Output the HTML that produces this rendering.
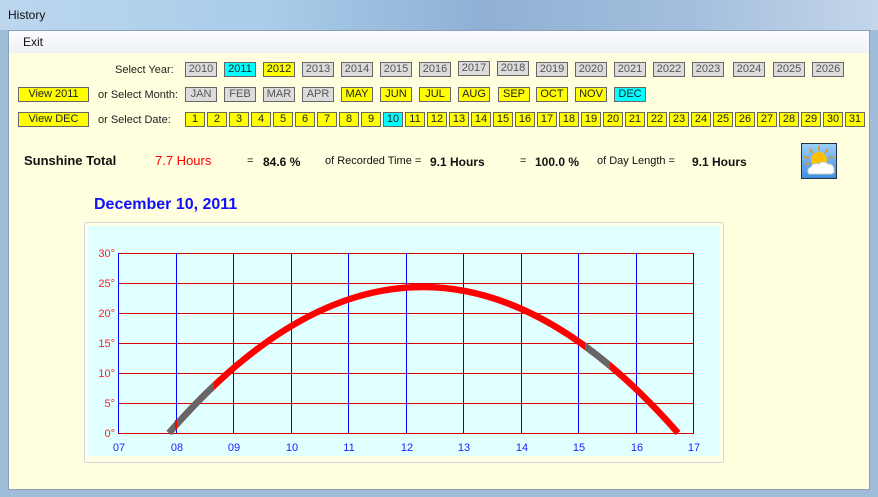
<!DOCTYPE html>
<html><head><meta charset="utf-8"><style>
body{margin:0;width:878px;height:497px;overflow:hidden;position:relative;font-family:"Liberation Sans",sans-serif;background:#9fbcd8}
.abs{position:absolute}
.title{left:0;top:0;width:878px;height:30px;background:linear-gradient(90deg,#bcd6ee 0%,#a9cdea 30%,#8fb0d4 55%,#a5c0de 80%,#c4d6ea 100%)}
.client{left:8px;top:30px;width:862px;height:460px;background:#ffffe0;border:1px solid #8aa0b8;box-sizing:border-box}
.menu{left:9px;top:31px;width:860px;height:22px;background:linear-gradient(#fbfcfe,#eef1f6)}
.b{position:absolute;height:15px;box-sizing:border-box;border:1px solid #666;font-size:11px;line-height:13px;text-align:center;color:#333}
.g{background:#dcdcdc;color:#555}.y{background:#ffff00;color:#222}.c{background:#00ffff;color:#222}
.lab{position:absolute;font-size:11px;color:#222}
.st{position:absolute;top:155px;font-size:12px;color:#111}
</style></head><body>
<div class="abs title"></div>
<div class="abs" style="left:8px;top:8px;font-size:12px;color:#111">History</div>
<div class="abs client"></div>
<div class="abs menu"></div>
<div class="abs" style="left:23px;top:35px;font-size:12px;color:#111">Exit</div>

<div class="lab" style="left:115px;top:64px">Select Year:</div>
<div class="lab" style="left:98px;top:89px">or Select Month:</div>
<div class="lab" style="left:98px;top:114px">or Select Date:</div>
<div class="b y" style="left:18px;top:87px;width:71px">View 2011</div>
<div class="b y" style="left:18px;top:112px;width:71px">View DEC</div>

<div class="b g" style="left:185px;top:62px;width:32px">2010</div>
<div class="b c" style="left:224px;top:62px;width:32px">2011</div>
<div class="b y" style="left:263px;top:62px;width:32px">2012</div>
<div class="b g" style="left:302px;top:62px;width:32px">2013</div>
<div class="b g" style="left:341px;top:62px;width:32px">2014</div>
<div class="b g" style="left:380px;top:62px;width:32px">2015</div>
<div class="b g" style="left:419px;top:62px;width:32px">2016</div>
<div class="b g" style="left:458px;top:61px;width:32px">2017</div>
<div class="b g" style="left:497px;top:61px;width:32px">2018</div>
<div class="b g" style="left:536px;top:62px;width:32px">2019</div>
<div class="b g" style="left:575px;top:62px;width:32px">2020</div>
<div class="b g" style="left:614px;top:62px;width:32px">2021</div>
<div class="b g" style="left:653px;top:62px;width:32px">2022</div>
<div class="b g" style="left:692px;top:62px;width:32px">2023</div>
<div class="b g" style="left:733px;top:62px;width:32px">2024</div>
<div class="b g" style="left:773px;top:62px;width:32px">2025</div>
<div class="b g" style="left:812px;top:62px;width:32px">2026</div>

<div class="b g" style="left:185px;top:87px;width:32px">JAN</div>
<div class="b g" style="left:224px;top:87px;width:32px">FEB</div>
<div class="b g" style="left:263px;top:87px;width:32px">MAR</div>
<div class="b g" style="left:302px;top:87px;width:32px">APR</div>
<div class="b y" style="left:341px;top:87px;width:32px">MAY</div>
<div class="b y" style="left:380px;top:87px;width:32px">JUN</div>
<div class="b y" style="left:419px;top:87px;width:32px">JUL</div>
<div class="b y" style="left:458px;top:87px;width:32px">AUG</div>
<div class="b y" style="left:498px;top:87px;width:32px">SEP</div>
<div class="b y" style="left:536px;top:87px;width:32px">OCT</div>
<div class="b y" style="left:575px;top:87px;width:32px">NOV</div>
<div class="b c" style="left:614px;top:87px;width:32px">DEC</div>

<div class="b y" style="left:185px;top:112px;width:20px">1</div>
<div class="b y" style="left:207px;top:112px;width:20px">2</div>
<div class="b y" style="left:229px;top:112px;width:20px">3</div>
<div class="b y" style="left:251px;top:112px;width:20px">4</div>
<div class="b y" style="left:273px;top:112px;width:20px">5</div>
<div class="b y" style="left:295px;top:112px;width:20px">6</div>
<div class="b y" style="left:317px;top:112px;width:20px">7</div>
<div class="b y" style="left:339px;top:112px;width:20px">8</div>
<div class="b y" style="left:361px;top:112px;width:20px">9</div>
<div class="b c" style="left:383px;top:112px;width:20px">10</div>
<div class="b y" style="left:405px;top:112px;width:20px">11</div>
<div class="b y" style="left:427px;top:112px;width:20px">12</div>
<div class="b y" style="left:449px;top:112px;width:20px">13</div>
<div class="b y" style="left:471px;top:112px;width:20px">14</div>
<div class="b y" style="left:493px;top:112px;width:20px">15</div>
<div class="b y" style="left:515px;top:112px;width:20px">16</div>
<div class="b y" style="left:537px;top:112px;width:20px">17</div>
<div class="b y" style="left:559px;top:112px;width:20px">18</div>
<div class="b y" style="left:581px;top:112px;width:20px">19</div>
<div class="b y" style="left:603px;top:112px;width:20px">20</div>
<div class="b y" style="left:625px;top:112px;width:20px">21</div>
<div class="b y" style="left:647px;top:112px;width:20px">22</div>
<div class="b y" style="left:669px;top:112px;width:20px">23</div>
<div class="b y" style="left:691px;top:112px;width:20px">24</div>
<div class="b y" style="left:713px;top:112px;width:20px">25</div>
<div class="b y" style="left:735px;top:112px;width:20px">26</div>
<div class="b y" style="left:757px;top:112px;width:20px">27</div>
<div class="b y" style="left:779px;top:112px;width:20px">28</div>
<div class="b y" style="left:801px;top:112px;width:20px">29</div>
<div class="b y" style="left:823px;top:112px;width:20px">30</div>
<div class="b y" style="left:845px;top:112px;width:20px">31</div>

<div class="st" style="left:24px;top:153px;font-size:13px;font-weight:bold">Sunshine Total</div>
<div class="st" style="left:155px;top:153px;font-size:13px;color:#f00">7.7 Hours</div>
<div class="st" style="left:247px;font-size:11px">=</div>
<div class="st" style="left:263px;font-weight:bold">84.6 %</div>
<div class="st" style="left:325px;font-size:11px">of Recorded Time =</div>
<div class="st" style="left:430px;font-weight:bold">9.1 Hours</div>
<div class="st" style="left:520px;font-size:11px">=</div>
<div class="st" style="left:535px;font-weight:bold">100.0 %</div>
<div class="st" style="left:597px;font-size:11px">of Day Length =</div>
<div class="st" style="left:692px;font-weight:bold">9.1 Hours</div>

<svg class="abs" style="left:801px;top:143px" width="36" height="36" viewBox="0 0 36 36">
<defs><linearGradient id="sk" x1="0" y1="0" x2="0" y2="1"><stop offset="0" stop-color="#9fd0f8"/><stop offset="1" stop-color="#3c8ee0"/></linearGradient></defs>
<rect x="0.5" y="0.5" width="35" height="35" fill="url(#sk)" stroke="#234"/>
<g stroke="#e8901a" stroke-width="1.5"><line x1="18" y1="3" x2="18" y2="8"/><line x1="9" y1="6" x2="12" y2="10"/><line x1="27" y1="6" x2="24" y2="10"/><line x1="3" y1="14" x2="8" y2="15"/><line x1="33" y1="14" x2="28" y2="15"/><line x1="4" y1="22" x2="8" y2="20"/></g>
<circle cx="18" cy="17" r="8" fill="#ffc000"/>
<path d="M8 31 Q5 26 10 24 Q12 19 18 21 Q22 17 27 21 Q33 21 33 27 Q34 31 29 31 Z" fill="#fff" stroke="#ccc"/>
</svg>

<div class="abs" style="left:94px;top:196px;font-size:16px;font-weight:bold;color:#1010ff">December 10, 2011</div>

<div class="abs" style="left:84px;top:222px;width:640px;height:241px;border:1px solid #d0d4d8;border-radius:3px;background:#ffffe8;box-sizing:border-box"></div>
<div class="abs" style="left:88px;top:226px;width:632px;height:230px;background:#e0ffff"></div>

<svg class="abs" style="left:0;top:0" width="878" height="497">
<g stroke="#dd0000" stroke-width="1">
<line x1="118" y1="253.5" x2="694" y2="253.5"/><line x1="118" y1="283.5" x2="694" y2="283.5"/><line x1="118" y1="313.5" x2="694" y2="313.5"/><line x1="118" y1="343.5" x2="694" y2="343.5"/><line x1="118" y1="373.5" x2="694" y2="373.5"/><line x1="118" y1="403.5" x2="694" y2="403.5"/><line x1="118" y1="433.5" x2="694" y2="433.5"/>
</g>
<g stroke="#0000ff" stroke-width="1">
<line x1="118.5" y1="253" x2="118.5" y2="433"/><line x1="176.5" y1="253" x2="176.5" y2="433"/><line x1="233.5" y1="253" x2="233.5" y2="433"/><line x1="291.5" y1="253" x2="291.5" y2="433"/><line x1="348.5" y1="253" x2="348.5" y2="433"/><line x1="406.5" y1="253" x2="406.5" y2="433"/><line x1="463.5" y1="253" x2="463.5" y2="433"/><line x1="521.5" y1="253" x2="521.5" y2="433"/><line x1="578.5" y1="253" x2="578.5" y2="433"/><line x1="636.5" y1="253" x2="636.5" y2="433"/><line x1="693.5" y1="253" x2="693.5" y2="433"/>
</g>
<defs><clipPath id="gc"><rect x="160" y="380" width="54" height="60"/><rect x="585" y="330" width="25" height="45"/></clipPath></defs>
<path d="M169 433 Q422 141 678 433" fill="none" stroke="#ff0000" stroke-width="6.5"/>
<path d="M169 433 Q422 141 678 433" fill="none" stroke="#666" stroke-width="6.5" clip-path="url(#gc)"/>
<line x1="176" y1="429" x2="176" y2="420" stroke="#f00" stroke-width="2"/>
<g font-family="Liberation Sans, sans-serif" font-size="11" fill="#ff2020" text-anchor="end">
<text x="115" y="257">30°</text><text x="115" y="287">25°</text><text x="115" y="317">20°</text><text x="115" y="347">15°</text><text x="115" y="377">10°</text><text x="115" y="407">5°</text><text x="115" y="437">0°</text>
</g>
<g font-family="Liberation Sans, sans-serif" font-size="11" fill="#2020ff" text-anchor="middle">
<text x="119" y="451">07</text><text x="177" y="451">08</text><text x="234" y="451">09</text><text x="292" y="451">10</text><text x="349" y="451">11</text><text x="407" y="451">12</text><text x="464" y="451">13</text><text x="522" y="451">14</text><text x="579" y="451">15</text><text x="637" y="451">16</text><text x="694" y="451">17</text>
</g>
</svg>
</body></html>
